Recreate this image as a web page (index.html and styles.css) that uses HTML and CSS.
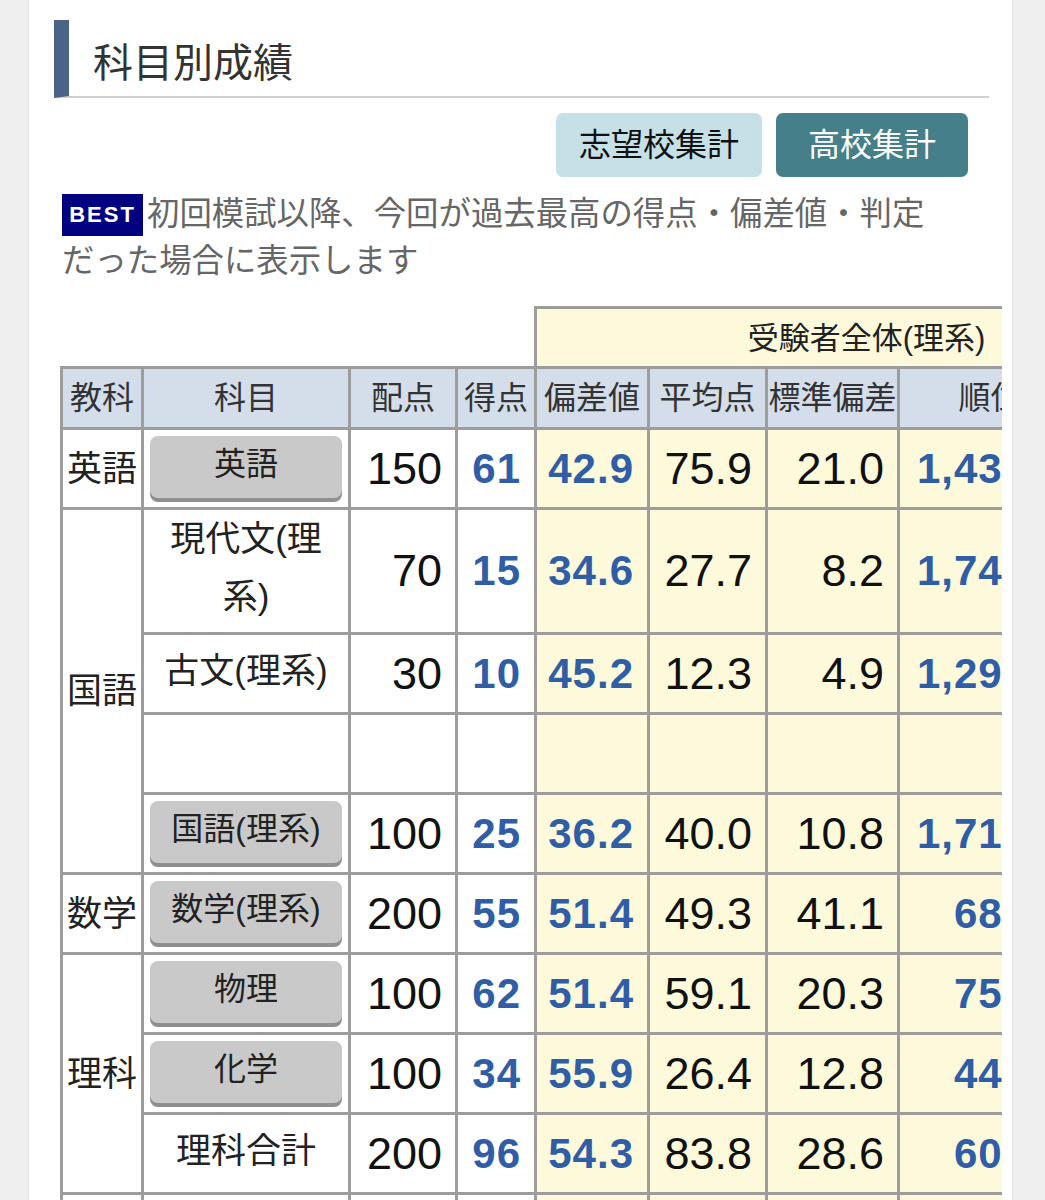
FILE: index.html
```html
<!DOCTYPE html>
<html lang="ja">
<head>
<meta charset="utf-8">
<title>科目別成績</title>
<link rel="stylesheet" href="styles.css">
</head>
<body>
<div class="card">
  <h2 class="section-title">科目別成績</h2>
  <div class="toggle">
    <button class="tab tab-light">志望校集計</button>
    <button class="tab tab-dark">高校集計</button>
  </div>
  <p class="note"><span class="best">BEST</span>初回模試以降、今回が過去最高の得点・偏差値・判定だった場合に表示します</p>
  <div class="table-scroll">
    <table class="scores">
      <colgroup>
        <col class="c-kyoka"><col class="c-kamoku"><col class="c-haiten"><col class="c-tokuten"><col class="c-hensa"><col class="c-heikin"><col class="c-std"><col class="c-rank"><col class="c-count">
      </colgroup>
      <thead>
        <tr class="group-row">
          <th class="blank" colspan="4"></th>
          <th class="group" colspan="5">受験者全体(理系)</th>
        </tr>
        <tr class="head-row">
          <th>教科</th><th>科目</th><th>配点</th><th>得点</th><th>偏差値</th><th>平均点</th><th>標準偏差</th><th>順位</th><th>受験者数</th>
        </tr>
      </thead>
      <tbody>
        <tr class="r80">
          <td class="kyoka">英語</td>
          <td class="name"><span class="sbtn">英語</span></td>
          <td class="num">150</td><td class="num blue">61</td>
          <td class="y num blue">42.9</td><td class="y num">75.9</td><td class="y num">21.0</td><td class="y num blue rank">1,437</td><td class="y num">3,372</td>
        </tr>
        <tr class="r125">
          <td class="kyoka" rowspan="4">国語</td>
          <td class="name plain">現代文(理系)</td>
          <td class="num">70</td><td class="num blue">15</td>
          <td class="y num blue">34.6</td><td class="y num">27.7</td><td class="y num">8.2</td><td class="y num blue rank">1,742</td><td class="y num">3,360</td>
        </tr>
        <tr class="r80">
          <td class="name plain">古文(理系)</td>
          <td class="num">30</td><td class="num blue">10</td>
          <td class="y num blue">45.2</td><td class="y num">12.3</td><td class="y num">4.9</td><td class="y num blue rank">1,296</td><td class="y num">3,360</td>
        </tr>
        <tr class="r80">
          <td class="name"></td>
          <td class="num"></td><td class="num"></td>
          <td class="y"></td><td class="y"></td><td class="y"></td><td class="y"></td><td class="y"></td>
        </tr>
        <tr class="r80">
          <td class="name"><span class="sbtn">国語(理系)</span></td>
          <td class="num">100</td><td class="num blue">25</td>
          <td class="y num blue">36.2</td><td class="y num">40.0</td><td class="y num">10.8</td><td class="y num blue rank">1,713</td><td class="y num">3,360</td>
        </tr>
        <tr class="r80">
          <td class="kyoka">数学</td>
          <td class="name"><span class="sbtn">数学(理系)</span></td>
          <td class="num">200</td><td class="num blue">55</td>
          <td class="y num blue">51.4</td><td class="y num">49.3</td><td class="y num">41.1</td><td class="y num blue rank">683</td><td class="y num">3,368</td>
        </tr>
        <tr class="r80">
          <td class="kyoka" rowspan="3">理科</td>
          <td class="name"><span class="sbtn">物理</span></td>
          <td class="num">100</td><td class="num blue">62</td>
          <td class="y num blue">51.4</td><td class="y num">59.1</td><td class="y num">20.3</td><td class="y num blue rank">752</td><td class="y num">2,874</td>
        </tr>
        <tr class="r80">
          <td class="name"><span class="sbtn">化学</span></td>
          <td class="num">100</td><td class="num blue">34</td>
          <td class="y num blue">55.9</td><td class="y num">26.4</td><td class="y num">12.8</td><td class="y num blue rank">441</td><td class="y num">3,301</td>
        </tr>
        <tr class="r80">
          <td class="name plain">理科合計</td>
          <td class="num">200</td><td class="num blue">96</td>
          <td class="y num blue">54.3</td><td class="y num">83.8</td><td class="y num">28.6</td><td class="y num blue rank">603</td><td class="y num">2,865</td>
        </tr>
        <tr class="r80">
          <td class="kyoka">総合</td>
          <td class="name plain">3教科</td>
          <td class="num">550</td><td class="num blue">231</td>
          <td class="y num blue">46.8</td><td class="y num">249.2</td><td class="y num">66.9</td><td class="y num blue rank">1,204</td><td class="y num">3,355</td>
        </tr>
      </tbody>
    </table>
  </div>
</div>
</body>
</html>
```

FILE: styles.css
```css
html, body {
  margin: 0;
  padding: 0;
}

body {
  background: #efefef;
  font-family: "Noto Sans CJK JP", sans-serif;
  color: #222;
}

.card {
  margin-left: 28px;
  width: 985px;
  min-height: 1300px;
  box-sizing: border-box;
  background: #fff;
  border-left: 1px solid #e2e2e2;
  border-right: 1px solid #e2e2e2;
  padding: 20px 23px 40px 25px;
}

.section-title {
  margin: 0;
  border-left: 15px solid #4b6387;
  border-bottom: 2px solid #d0d0d0;
  padding: 20px 0 16px 24px;
  font-size: 40px;
  line-height: 40px;
  font-weight: normal;
  color: #333;
}

.toggle {
  display: flex;
  justify-content: flex-end;
  gap: 14px;
  margin-top: 15px;
  padding-right: 21px;
}

.tab {
  height: 64px;
  min-width: 192px;
  padding: 0 23px 6px;
  border: none;
  border-radius: 7px;
  font-family: "Noto Sans CJK JP", sans-serif;
  font-size: 32px;
}

.tab-light {
  background: #c5e0e6;
  color: #111;
}

.tab-dark {
  background: #447f8a;
  color: #fff;
}

.note {
  margin: 10px 0 0 8px;
  padding-right: 60px;
  font-size: 32.4px;
  line-height: 47px;
  color: #666;
}

.best {
  display: inline-block;
  width: 81px;
  height: 42px;
  line-height: 42px;
  margin-right: 4px;
  vertical-align: bottom;
  position: relative;
  top: 2px;
  background: #000080;
  color: #fff;
  text-align: center;
  font-family: "Liberation Sans", sans-serif;
  font-weight: bold;
  font-size: 22px;
  letter-spacing: 2px;
}

.table-scroll {
  margin: 25px -13px 0 6px;
  overflow: hidden;
}

.scores {
  border-collapse: collapse;
  table-layout: fixed;
  width: 1136px;
  font-family: "Liberation Sans", "Noto Sans CJK JP", sans-serif;
}

.c-kyoka { width: 81px; }
.c-kamoku { width: 207px; }
.c-haiten { width: 107px; }
.c-tokuten { width: 79px; }
.c-hensa { width: 113px; }
.c-heikin { width: 118px; }
.c-std { width: 132px; }
.c-rank { width: 184px; }
.c-count { width: 115px; }

.scores th,
.scores td {
  border: 3px solid #9d9d9d;
  padding: 0;
  vertical-align: middle;
}

.scores th.blank {
  border: none;
  background: #fff;
}

.group-row {
  height: 60px;
}

.group {
  background: #fdfadb;
  font-weight: normal;
  font-size: 31px;
  color: #222;
  text-align: center;
  white-space: nowrap;
  padding-bottom: 5px !important;
}

.head-row {
  height: 61px;
}

.head-row th {
  background: #d4deea;
  font-weight: normal;
  font-size: 32px;
  color: #333;
  text-align: center;
  white-space: nowrap;
  padding-bottom: 6px;
}

.r80 { height: 80px; }
.r125 { height: 125px; }

.scores td.y {
  background: #fdfadb;
}

.kyoka {
  text-align: center;
  font-size: 35px;
  color: #222;
  padding-bottom: 7px !important;
}

.name {
  text-align: center;
}

.name.plain {
  padding: 0 8px 6px;
  font-size: 35px;
  line-height: 58px;
  color: #222;
}

.sbtn {
  display: block;
  width: 192px;
  height: 62px;
  line-height: 56px;
  margin: 0 auto 4px;
  border-radius: 8px;
  background: #c9c9c9;
  box-shadow: 0 4px 0 #8f8f8f;
  font-size: 32px;
  color: #222;
}

.num {
  text-align: right;
  padding-right: 13px !important;
  font-size: 45px;
  color: #111;
  white-space: nowrap;
}

.num.blue {
  font-size: 42px;
  letter-spacing: 1px;
  font-weight: bold;
  color: #2f5ea6;
}

.num.rank {
  padding-right: 54px !important;
}
```
